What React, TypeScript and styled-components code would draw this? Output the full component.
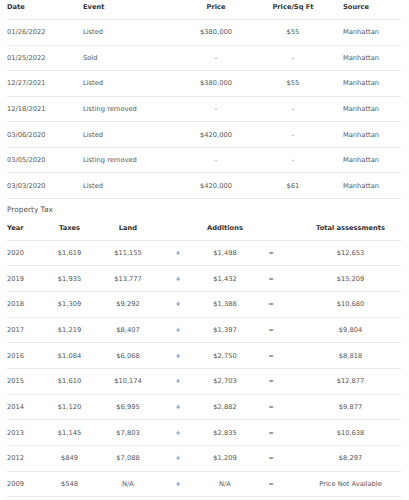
import React from "react";
import styled, { createGlobalStyle } from "styled-components";

const Global = createGlobalStyle`
  html, body { margin: 0; padding: 0; background: #fff; }
  body { font-family: "DejaVu Sans", Verdana, sans-serif; }
`;

const Page = styled.div`
  padding: 0 8px 0 7px;
  width: 394px;
`;

const HistoryGrid = styled.div`
  display: grid;
  grid-template-columns: 76px 93px 80px 74px 71px;
`;

const TaxGrid = styled.div`
  display: grid;
  grid-template-columns: 37px 51px 66px 34px 60px 32px 114px;
`;

const Row = styled.div<{ $h: number; $head?: boolean }>`
  display: contents;
  & > div {
    height: ${(p) => p.$h}px;
    box-sizing: border-box;
    border-bottom: 1px solid #ebebeb;
    display: flex;
    align-items: ${(p) => (p.$head ? "flex-start" : "center")};
    padding-top: ${(p) => (p.$head ? "3px" : "0")};
    font-size: 6.7px;
    line-height: 8px;
    white-space: nowrap;
    font-weight: ${(p) => (p.$head ? 700 : 400)};
    color: ${(p) => (p.$head ? "#333" : "#555")};
  }
`;

const TaxHeadRow = styled(Row)`
  & > div {
    align-items: center;
    padding-top: 0;
  }
`;

const Cell = styled.div<{ $align?: "left" | "center"; $pl?: number }>`
  justify-content: ${(p) => (p.$align === "center" ? "center" : "flex-start")};
  padding-left: ${(p) => p.$pl ?? 0}px;
`;

const SectionTitle = styled.div`
  height: 17px;
  box-sizing: border-box;
  padding-top: 6px;
  font-size: 7.4px;
  line-height: 9px;
  color: #555;
`;

const history = [
  ["01/26/2022", "Listed", "$380,000", "$55", "Manhattan"],
  ["01/25/2022", "Sold", "-", "-", "Manhattan"],
  ["12/27/2021", "Listed", "$380,000", "$55", "Manhattan"],
  ["12/18/2021", "Listing removed", "-", "-", "Manhattan"],
  ["03/06/2020", "Listed", "$420,000", "-", "Manhattan"],
  ["03/05/2020", "Listing removed", "-", "-", "Manhattan"],
  ["03/03/2020", "Listed", "$420,000", "$61", "Manhattan"],
];

const taxes = [
  ["2020", "$1,619", "$11,155", "$1,498", "$12,653"],
  ["2019", "$1,935", "$13,777", "$1,432", "$15,209"],
  ["2018", "$1,309", "$9,292", "$1,388", "$10,680"],
  ["2017", "$1,219", "$8,407", "$1,397", "$9,804"],
  ["2016", "$1,084", "$6,068", "$2,750", "$8,818"],
  ["2015", "$1,610", "$10,174", "$2,703", "$12,877"],
  ["2014", "$1,120", "$6,995", "$2,882", "$9,877"],
  ["2013", "$1,145", "$7,803", "$2,835", "$10,638"],
  ["2012", "$849", "$7,088", "$1,209", "$8,297"],
  ["2009", "$548", "N/A", "N/A", "Price Not Available"],
];

export default function App() {
  return (
    <Page>
      <Global />
      <HistoryGrid>
        <Row $h={20} $head>
          <Cell>Date</Cell>
          <Cell>Event</Cell>
          <Cell $align="center">Price</Cell>
          <Cell $align="center">Price/Sq Ft</Cell>
          <Cell $pl={13}>Source</Cell>
        </Row>
        {history.map((r, i) => (
          <Row $h={25.57} key={i}>
            <Cell>{r[0]}</Cell>
            <Cell>{r[1]}</Cell>
            <Cell $align="center">{r[2]}</Cell>
            <Cell $align="center">{r[3]}</Cell>
            <Cell $pl={13}>{r[4]}</Cell>
          </Row>
        ))}
      </HistoryGrid>
      <SectionTitle>Property Tax</SectionTitle>
      <TaxGrid>
        <TaxHeadRow $h={24.6} $head>
          <Cell>Year</Cell>
          <Cell $align="center">Taxes</Cell>
          <Cell $align="center">Land</Cell>
          <Cell $align="center"></Cell>
          <Cell $align="center">Additions</Cell>
          <Cell $align="center"></Cell>
          <Cell $align="center" $pl={13}>Total assessments</Cell>
        </TaxHeadRow>
        {taxes.map((r, i) => (
          <Row $h={25.7} key={i}>
            <Cell>{r[0]}</Cell>
            <Cell $align="center">{r[1]}</Cell>
            <Cell $align="center">{r[2]}</Cell>
            <Cell $align="center">+</Cell>
            <Cell $align="center">{r[3]}</Cell>
            <Cell $align="center">=</Cell>
            <Cell $align="center" $pl={13}>{r[4]}</Cell>
          </Row>
        ))}
      </TaxGrid>
    </Page>
  );
}
